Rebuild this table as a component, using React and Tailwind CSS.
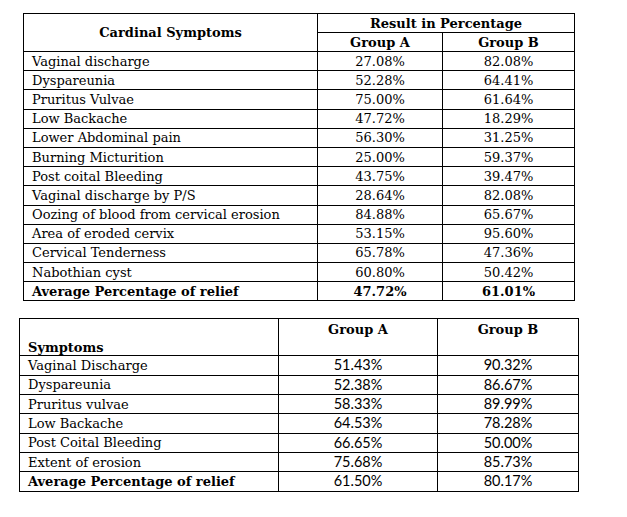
import React from "react";

const cardinal = [
  ["Vaginal discharge", "27.08%", "82.08%"],
  ["Dyspareunia", "52.28%", "64.41%"],
  ["Pruritus Vulvae", "75.00%", "61.64%"],
  ["Low Backache", "47.72%", "18.29%"],
  ["Lower Abdominal pain", "56.30%", "31.25%"],
  ["Burning Micturition", "25.00%", "59.37%"],
  ["Post coital Bleeding", "43.75%", "39.47%"],
  ["Vaginal discharge by P/S", "28.64%", "82.08%"],
  ["Oozing of blood from cervical erosion", "84.88%", "65.67%"],
  ["Area of eroded cervix", "53.15%", "95.60%"],
  ["Cervical Tenderness", "65.78%", "47.36%"],
  ["Nabothian cyst", "60.80%", "50.42%"],
];

const symptoms = [
  ["Vaginal Discharge", "51.43%", "90.32%"],
  ["Dyspareunia", "52.38%", "86.67%"],
  ["Pruritus vulvae", "58.33%", "89.99%"],
  ["Low Backache", "64.53%", "78.28%"],
  ["Post Coital Bleeding", "66.65%", "50.00%"],
  ["Extent of erosion", "75.68%", "85.73%"],
];

const serif = "font-['DejaVu_Serif',serif]";
const sans = "font-['Lato',sans-serif]";

export default function App() {
  return (
    <div className={`w-[627px] h-[517px] bg-white text-black text-[13px] ${serif}`}>
      {/* ===== table 1 ===== */}
      <table className="ml-[23px] mt-[13px] border-collapse table-fixed w-[551px]">
        <colgroup>
          <col className="w-[294px]" />
          <col className="w-[125px]" />
          <col className="w-[132px]" />
        </colgroup>
        <thead>
          <tr className="h-[19px]">
            <th rowSpan={2} className="border border-black font-bold text-center leading-none">
              Cardinal Symptoms
            </th>
            <th colSpan={2} className="border border-black font-bold text-center leading-none">
              Result in Percentage
            </th>
          </tr>
          <tr className="h-[19px]">
            <th className="border border-black font-bold text-center leading-none">Group A</th>
            <th className="border border-black font-bold text-center leading-none">Group B</th>
          </tr>
        </thead>
        <tbody>
          {cardinal.map(([name, a, b]) => (
            <tr key={name} className="h-[19.2px]">
              <td className="border border-black pl-[8px] leading-none">{name}</td>
              <td className="border border-black text-center leading-none">{a}</td>
              <td className="border border-black text-center leading-none">{b}</td>
            </tr>
          ))}
          <tr className="h-[19.2px] font-bold">
            <td className="border border-black pl-[8px] leading-none">Average Percentage of relief</td>
            <td className="border border-black text-center leading-none">47.72%</td>
            <td className="border border-black text-center leading-none">61.01%</td>
          </tr>
        </tbody>
      </table>

      {/* ===== table 2 ===== */}
      <table className="ml-[19px] mt-[17px] border-collapse table-fixed w-[559px]">
        <colgroup>
          <col className="w-[259px]" />
          <col className="w-[159px]" />
          <col className="w-[141px]" />
        </colgroup>
        <thead>
          <tr className="h-[37px]">
            <th className="border border-black font-bold text-left align-bottom pl-[8px] pb-[1px] leading-none">
              Symptoms
            </th>
            <th className="border border-black font-bold text-center align-top pt-[4px] leading-none">
              Group A
            </th>
            <th className="border border-black font-bold text-center align-top pt-[4px] leading-none">
              Group B
            </th>
          </tr>
        </thead>
        <tbody>
          {symptoms.map(([name, a, b]) => (
            <tr key={name} className="h-[19.3px]">
              <td className="border border-black pl-[8px] leading-none">{name}</td>
              <td className={`border border-black text-center leading-none text-[14.5px] ${sans}`}>{a}</td>
              <td className={`border border-black text-center leading-none text-[14.5px] ${sans}`}>{b}</td>
            </tr>
          ))}
          <tr className="h-[19.3px]">
            <td className="border border-black pl-[8px] leading-none font-bold">Average Percentage of relief</td>
            <td className={`border border-black text-center leading-none text-[14.5px] ${sans}`}>61.50%</td>
            <td className={`border border-black text-center leading-none text-[14.5px] ${sans}`}>80.17%</td>
          </tr>
        </tbody>
      </table>
    </div>
  );
}
